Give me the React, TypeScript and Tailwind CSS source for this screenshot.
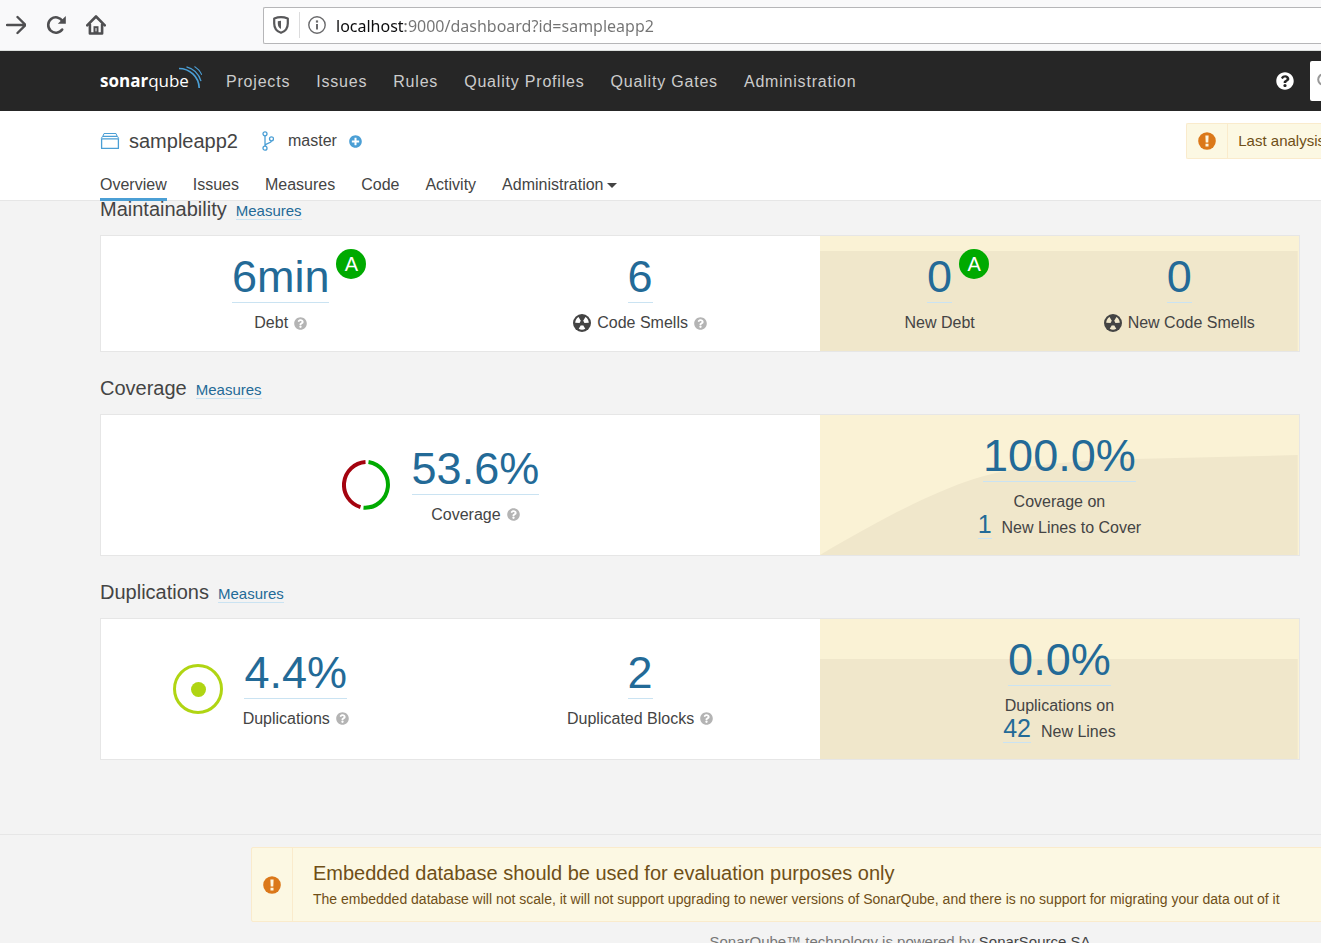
import React from 'react';
import { FaPlusCircle, FaQuestionCircle } from 'react-icons/fa';

const HelpIcon = ({ label }: { label: string }) => (
  <button type="button" aria-label={label} className="ml-1.5 text-[#b4b4b4]">
    <FaQuestionCircle className="block h-[13px] w-[13px]" />
  </button>
);

const WarnIcon = () => (
  <svg viewBox="0 0 18 18" className="h-[18px] w-[18px]" aria-hidden="true">
    <circle cx="9" cy="9" r="8.8" fill="#db781a" />
    <path d="M7.4 3.4h3.2l-.3 7.2H7.7zM7.5 11.8h3v2.8h-3z" fill="#fdf6e0" />
  </svg>
);

const CodeSmellIcon = ({ lobes }: { lobes: string }) => (
  <svg viewBox="0 0 18 18" className="mr-1.5 h-[18px] w-[18px]" aria-hidden="true">
    <circle cx="9" cy="9" r="9" fill="#444" />
    <path
      fill={lobes}
      d="M12.300 14.800A7 7 0 0 1 5.700 14.800L7.900 11.200A2.400 2.400 0 0 0 10.100 11.200zM2.200 8.800A7 7 0 0 1 5.600 3.100L7.900 7A2.400 2.400 0 0 0 6.700 9zM15.800 8.800A7 7 0 0 0 12.400 3.100L10.100 7A2.400 2.400 0 0 1 11.300 9z"
    />
  </svg>
);

const BrowserBar = () => (
  <div className="flex h-[51px] items-center border-b border-[#dcdfdd] bg-[#f9f9fa] pl-1.5">
    <div className="flex items-center gap-5 text-[#4f4f51]">
      <button type="button" aria-label="Forward">
        <svg viewBox="0 0 20 20" className="block h-5 w-5" fill="none" stroke="currentColor" strokeWidth="2.4" strokeLinecap="round" strokeLinejoin="round">
          <path d="M1 10h18M11.500 2l8 8-8 8" />
        </svg>
      </button>
      <button type="button" aria-label="Reload">
        <svg viewBox="0 0 20 20" className="block h-5 w-5" fill="none" stroke="currentColor" strokeWidth="2.600" strokeLinecap="round">
          <path d="M16.200 14.500A7.700 7.700 0 1 1 16.500 6" />
          <path d="M19.800 1v7.800h-8z" fill="currentColor" stroke="none" />
        </svg>
      </button>
      <button type="button" aria-label="Home">
        <svg viewBox="0 0 20 20" className="block h-5 w-5" fill="none" stroke="currentColor" strokeWidth="2.600" strokeLinecap="round" strokeLinejoin="round">
          <path d="M1.200 10.300 10 1.500l8.800 8.800" />
          <path d="M3.900 9.500v9h12.200v-9" />
          <path d="M7.500 18.500v-7.300h5v7.300z" fill="currentColor" stroke="none" />
          <path d="M10 13.500v2.500" stroke="#f9f9fa" strokeWidth="1" />
        </svg>
      </button>
    </div>
    <div className="ml-[157px] flex h-[37px] flex-1 items-center rounded-l-xs border border-r-0 border-[#b6b6b8] bg-white">
      <svg viewBox="0 0 16 18" className="ml-[9px] h-[18px] w-4" fill="none" stroke="#58585a" strokeWidth="2.200" strokeLinejoin="round">
        <path d="M8 1.200c2.200 0 4.600.5 6.800 1.300v5c0 4.500-2.600 7.900-6.800 9.300C3.800 15.400 1.200 12 1.200 7.500v-5C3.400 1.700 5.800 1.200 8 1.200z" />
        <path d="M8 4.800v8.200c-2.200-1.200-3.200-3-3.200-5.500V5.200z" fill="#58585a" stroke="none" />
      </svg>
      <span className="ml-[10px] h-[26px] w-px bg-[#dcdcdd]" />
      <svg viewBox="0 0 18 18" className="ml-2 h-[18px] w-[18px]" fill="none" stroke="#6a6a6c">
        <circle cx="9" cy="9" r="8.200" strokeWidth="1.400" />
        <path d="M9 8v5.500" strokeWidth="2" />
        <path d="M9 4.400v2.200" strokeWidth="2.200" />
      </svg>
      <input
        aria-label="Address"
        defaultValue="localhost:9000/dashboard?id=sampleapp2"
        className="ml-2.5 h-8 min-w-0 flex-1 bg-linear-to-r from-[#0c0c0d] from-[69px] to-[#737373] to-[69px] bg-clip-text pt-0.5 font-['Noto_Sans',sans-serif] text-base text-transparent outline-none"
      />
    </div>
  </div>
);

const Logo = () => (
  <a href="#home" aria-label="SonarQube" className="flex h-full w-[103px] items-center font-['Open_Sans',sans-serif] text-white">
    <span className="text-[17px] leading-5">
      <b>sonar</b>qube
    </span>
    <svg viewBox="0 0 23 23" className="-ml-2.5 mt-[15px] h-[23px] w-[23px] shrink-0 self-start" fill="none" stroke="#4b9fd5">
      <path d="M0 2.500C10.500 2.500 19.800 10.500 20.200 22" strokeWidth="1.700" />
      <path d="M7.500.8C14.500 2.600 20 8 22 15.200" strokeWidth="1.300" />
      <path d="M15.500.5C18.800 2.600 21.300 5.400 22.700 8.800" strokeWidth="1.100" />
    </svg>
  </a>
);

const globalLinks = ['Projects', 'Issues', 'Rules', 'Quality Profiles', 'Quality Gates', 'Administration'];

const GlobalNav = () => (
  <header className="flex h-[60px] items-center bg-[#262626] pl-[100px]">
    <Logo />
    <nav className="ml-[23px] flex gap-[26px] pt-0.5 tracking-wider text-[#ccc]">
      {globalLinks.map((l) => (
        <a key={l} href="#nav" className="whitespace-nowrap">{l}</a>
      ))}
    </nav>
    <button type="button" aria-label="Help" className="ml-auto text-white">
      <FaQuestionCircle className="block h-[18px] w-[18px]" />
    </button>
    <div className="-mr-[269px] ml-4 flex h-10 w-[280px] shrink-0 items-center rounded-xs bg-white pl-[7px]">
      <svg viewBox="0 0 16 16" className="h-4 w-4" fill="none" stroke="#999" strokeWidth="2">
        <circle cx="6.500" cy="6.500" r="5.300" />
        <path d="m10.500 10.500 4.500 4.500" />
      </svg>
      <input type="search" aria-label="Search" className="h-9 min-w-0 flex-1 outline-none" />
    </div>
  </header>
);

const ContextNav = () => (
  <div className="border-b border-[#e6e6e6] bg-white pl-[100px] pt-3">
    <div className="flex h-9 items-center">
      <svg viewBox="0 0 20 18" className="h-[18px] w-5" fill="none" stroke="#4b9fd5">
        <path d="M1.600 6.800h16.800v9.600H1.600z" strokeWidth="1.300" strokeLinejoin="round" />
        <path d="M2.500 4.300h15M4 1.500h12" strokeWidth="1.200" />
        <path d="M1.300 6.500 2.500 4.300M18.700 6.500l-1.200-2.200M3 4l1-2.500M17 4l-1-2.500" />
      </svg>
      <a href="#project" className="ml-[9px] text-xl">sampleapp2</a>
      <svg viewBox="0 0 12 20" className="ml-6 h-5 w-3" fill="none" stroke="#4b9fd5" strokeWidth="1.300">
        <circle cx="3" cy="2.800" r="2" />
        <circle cx="3" cy="17.200" r="2" />
        <circle cx="9.500" cy="7.800" r="2" />
        <path d="M3 4.800v10.400M9.500 9.800c-.2 3-5.500 1.800-6.500 5" />
      </svg>
      <span className="ml-3.5">master</span>
      <button type="button" aria-label="Branches" className="ml-3 text-[#4b9fd5]">
        <FaPlusCircle className="block h-[13px] w-[13px]" />
      </button>
      <div role="status" className="-mr-1 ml-auto flex h-9 items-stretch rounded-l-xs border border-r-0 border-[#faebcc] bg-[#fcf8e3] text-[15px] text-[#6f4f17]">
        <span className="flex w-[41px] items-center justify-center border-r border-[#faebcc]"><WarnIcon /></span>
        <span className="flex items-center whitespace-nowrap pl-2.5">Last analysis</span>
      </div>
    </div>
    <nav className="-mb-px mt-3.5 flex gap-[26px]">
      <a href="#overview" className="border-b-3 border-[#4b9fd5] pb-px">Overview</a>
      {['Issues', 'Measures', 'Code', 'Activity'].map((t) => (
        <a key={t} href="#tab">{t}</a>
      ))}
      <button type="button" className="flex h-6 items-center">
        Administration
        <svg viewBox="0 0 10 5" className="ml-1 h-[5px] w-2.5" aria-hidden="true"><path d="M0 0h10L5 5z" fill="#444" /></svg>
      </button>
    </nav>
  </div>
);

const Value = ({ children }: { children: React.ReactNode }) => (
  <a href="#measure" className="block border-b border-[#cae3f2] text-[45px] leading-[50px] text-[#236a97]">{children}</a>
);

const Rating = () => (
  <a href="#rating" className="absolute -top-[3px] left-full ml-[7px] flex h-[30px] w-[30px] items-center justify-center rounded-full bg-[#00aa00] text-xl text-white">A</a>
);

const Measure = ({ value, label, rated, smell, help }: { value: string; label: string; rated?: boolean; smell?: string; help?: boolean }) => (
  <div className="flex flex-col items-center">
    <div className="relative">
      <Value>{value}</Value>
      {rated && <Rating />}
    </div>
    <div className="mt-2 flex items-center">
      {smell && <CodeSmellIcon lobes={smell} />}
      <span>{label}</span>
      {help && <HelpIcon label={`About ${label}`} />}
    </div>
  </div>
);

const Cell = ({ children }: { children: React.ReactNode }) => (
  <div className="relative flex flex-1 items-center justify-center">{children}</div>
);

const Charted = ({ children }: { children: React.ReactNode }) => (
  <div className="mr-10 flex items-center gap-5">{children}</div>
);

const Leak = ({ path, children, className }: { path: string; children: React.ReactNode; className: string }) => (
  <div className={`relative flex flex-2 justify-center bg-[#faf2d5] ${className}`}>
    <svg viewBox="0 0 480 140" preserveAspectRatio="none" className="absolute inset-0 h-full w-full" aria-hidden="true">
      <path d={path} fill="#f0e7cb" />
    </svg>
    {children}
  </div>
);

const NewLines = ({ value, label, count, unit }: { value: string; label: string; count: string; unit: string }) => (
  <div className="relative flex flex-col items-center">
    <Value>{value}</Value>
    <div className="mt-2">{label}</div>
    <div className="flex items-baseline gap-2.5 leading-5">
      <a href="#lines" className="text-[25px] leading-5 text-[#236a97]">
        <span className="border-b border-[#cae3f2]">{count}</span>
      </a>
      <span>{unit}</span>
    </div>
  </div>
);

const Section = ({ title, children }: { title: string; children: React.ReactNode }) => (
  <section>
    <div className="mb-4 flex items-baseline gap-[9px] leading-4">
      <h2 className="text-xl leading-4">{title}</h2>
      <a href="#measures" className="text-[15px] leading-4 text-[#236a97]">
        <span className="border-b border-[#cae3f2]">Measures</span>
      </a>
    </div>
    <div className="flex border border-[#e6e6e6] bg-white">{children}</div>
  </section>
);

const Footer = () => (
  <footer className="mt-[74px] border-t border-[#e6e6e6] pl-[251px] pt-3">
    <div className="-mr-[228px]">
      <div role="alert" className="flex items-stretch rounded-xs border border-[#faebcc] bg-[#fcf8e3] text-[#6f4f17]">
        <span className="flex w-[41px] shrink-0 items-center justify-center border-r border-[#faebcc]"><WarnIcon /></span>
        <div className="whitespace-nowrap pb-2.5 pl-5 pt-[11px]">
          <p className="text-xl leading-7">Embedded database should be used for evaluation purposes only</p>
          <p className="text-sm leading-6">The embedded database will not scale, it will not support upgrading to newer versions of SonarQube, and there is no support for migrating your data out of it</p>
        </div>
      </div>
      <p className="mt-2.5 text-center text-[15px] leading-5 text-[#777]">
        SonarQube™ technology is powered by <a href="#sonarsource" className="text-[#444]">SonarSource SA</a>
      </p>
    </div>
  </footer>
);

export default function App() {
  return (
    <div className="h-screen overflow-hidden bg-[#f3f3f3] font-['Liberation_Sans',Arial,sans-serif] text-base text-[#444]">
      <BrowserBar />
      <GlobalNav />
      <ContextNav />
      <main className="ml-[100px] mr-[21px] flex flex-col gap-7">
        <Section title="Maintainability">
          <div className="flex flex-3 py-4">
            <Cell><Measure value="6min" label="Debt" rated help /></Cell>
            <Cell><Measure value="6" label="Code Smells" smell="#fff" help /></Cell>
          </div>
          <Leak path="M0 18.300H478.500V140H0z" className="py-4">
            <Cell><Measure value="0" label="New Debt" rated /></Cell>
            <Cell><Measure value="0" label="New Code Smells" smell="#f0e7cb" /></Cell>
          </Leak>
        </Section>
        <Section title="Coverage">
          <div className="flex flex-3">
            <Cell>
              <Charted>
                <svg viewBox="0 0 50 50" className="h-[50px] w-[50px]" fill="none" strokeWidth="4" aria-hidden="true">
                  <path d="M26.500 2.050A23 23 0 0 1 21.500 47.730" stroke="#00aa00" />
                  <path d="M18.500 47.070A23 23 0 0 1 23.500 2.050" stroke="#a4030f" />
                </svg>
                <Measure value="53.6%" label="Coverage" help />
              </Charted>
            </Cell>
          </div>
          <Leak path="M0 140C64 102 114 77 154 64S248 46 314 44L478.500 40V140z" className="pb-[17px] pt-4">
            <NewLines value="100.0%" label="Coverage on" count="1" unit="New Lines to Cover" />
          </Leak>
        </Section>
        <Section title="Duplications">
          <div className="flex flex-3">
            <Cell>
              <Charted>
                <svg viewBox="0 0 50 50" className="h-[50px] w-[50px]" aria-hidden="true">
                  <circle cx="25" cy="25" r="23.500" fill="none" stroke="#b0d513" strokeWidth="3" />
                  <circle cx="25.500" cy="25.500" r="7.500" fill="#b0d513" />
                </svg>
                <Measure value="4.4%" label="Duplications" help />
              </Charted>
            </Cell>
            <Cell><Measure value="2" label="Duplicated Blocks" help /></Cell>
          </div>
          <Leak path="M0 40H478.500V140H0z" className="pb-[17px] pt-4">
            <NewLines value="0.0%" label="Duplications on" count="42" unit="New Lines" />
          </Leak>
        </Section>
      </main>
      <Footer />
    </div>
  );
}
